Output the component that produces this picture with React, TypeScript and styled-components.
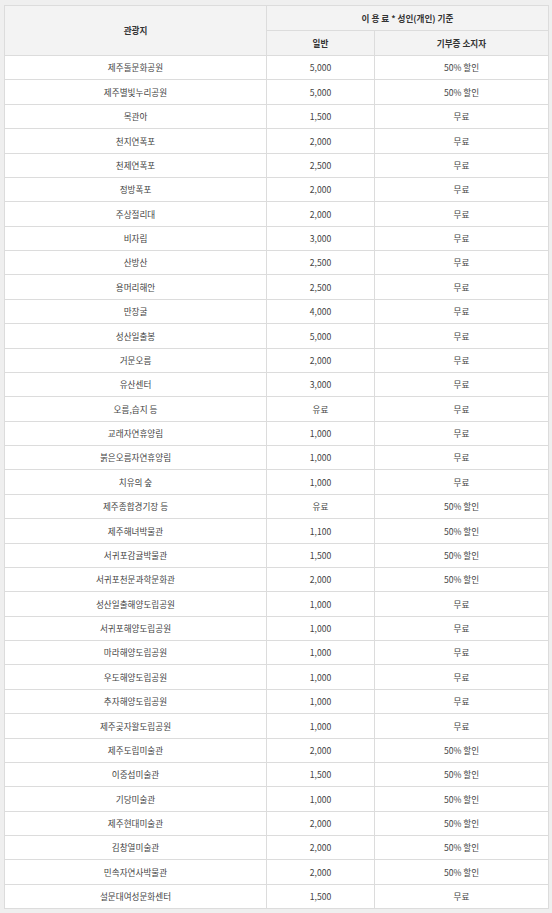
import React from "react";
import styled, { createGlobalStyle } from "styled-components";

const Global = createGlobalStyle`
  html, body { margin: 0; padding: 0; background: #efefef; }
  body { font-family: "Noto Sans CJK KR", "Noto Sans", sans-serif; }
`;

const Page = styled.div`
  padding: 5px 3px 6px 4px;
`;

const Table = styled.table`
  width: 545px;
  border-collapse: collapse;
  table-layout: fixed;
  background: #fff;
  border: 1px solid #dcdcdc;
  font-size: 8.6px;
  color: #444;
`;

const HeadCell = styled.th`
  background: #f3f3f3;
  border: 1px solid #dcdcdc;
  font-weight: bold;
  color: #333;
  height: 24px;
  padding: 0;
  text-align: center;
  vertical-align: middle;
  line-height: 1;
`;

const Row = styled.tr`
  height: 24.38px;
`;

const Cell = styled.td`
  border: 1px solid #dcdcdc;
  padding: 0;
  text-align: center;
  vertical-align: middle;
  line-height: 1;
`;

type Item = [string, string, string];

const data: Item[] = [
  ["제주돌문화공원", "5,000", "50% 할인"],
  ["제주별빛누리공원", "5,000", "50% 할인"],
  ["목관아", "1,500", "무료"],
  ["천지연폭포", "2,000", "무료"],
  ["천제연폭포", "2,500", "무료"],
  ["정방폭포", "2,000", "무료"],
  ["주상절리대", "2,000", "무료"],
  ["비자림", "3,000", "무료"],
  ["산방산", "2,500", "무료"],
  ["용머리해안", "2,500", "무료"],
  ["만장굴", "4,000", "무료"],
  ["성산일출봉", "5,000", "무료"],
  ["거문오름", "2,000", "무료"],
  ["유산센터", "3,000", "무료"],
  ["오름,습지 등", "유료", "무료"],
  ["교래자연휴양림", "1,000", "무료"],
  ["붉은오름자연휴양림", "1,000", "무료"],
  ["치유의 숲", "1,000", "무료"],
  ["제주종합경기장 등", "유료", "50% 할인"],
  ["제주해녀박물관", "1,100", "50% 할인"],
  ["서귀포감귤박물관", "1,500", "50% 할인"],
  ["서귀포천문과학문화관", "2,000", "50% 할인"],
  ["성산일출해양도립공원", "1,000", "무료"],
  ["서귀포해양도립공원", "1,000", "무료"],
  ["마라해양도립공원", "1,000", "무료"],
  ["우도해양도립공원", "1,000", "무료"],
  ["추자해양도립공원", "1,000", "무료"],
  ["제주곶자왈도립공원", "1,000", "무료"],
  ["제주도립미술관", "2,000", "50% 할인"],
  ["이중섭미술관", "1,500", "50% 할인"],
  ["기당미술관", "1,000", "50% 할인"],
  ["제주현대미술관", "2,000", "50% 할인"],
  ["김창열미술관", "2,000", "50% 할인"],
  ["민속자연사박물관", "2,000", "50% 할인"],
  ["설문대여성문화센터", "1,500", "무료"],
];

export default function App() {
  return (
    <>
      <Global />
      <Page>
        <Table>
          <colgroup>
            <col style={{ width: 262 }} />
            <col style={{ width: 108 }} />
            <col />
          </colgroup>
          <thead>
            <tr>
              <HeadCell rowSpan={2}>관광지</HeadCell>
              <HeadCell colSpan={2}>이 용 료 * 성인(개인) 기준</HeadCell>
            </tr>
            <tr>
              <HeadCell>일반</HeadCell>
              <HeadCell>기부증 소지자</HeadCell>
            </tr>
          </thead>
          <tbody>
            {data.map(([name, fee, donor]) => (
              <Row key={name}>
                <Cell>{name}</Cell>
                <Cell>{fee}</Cell>
                <Cell>{donor}</Cell>
              </Row>
            ))}
          </tbody>
        </Table>
      </Page>
    </>
  );
}
